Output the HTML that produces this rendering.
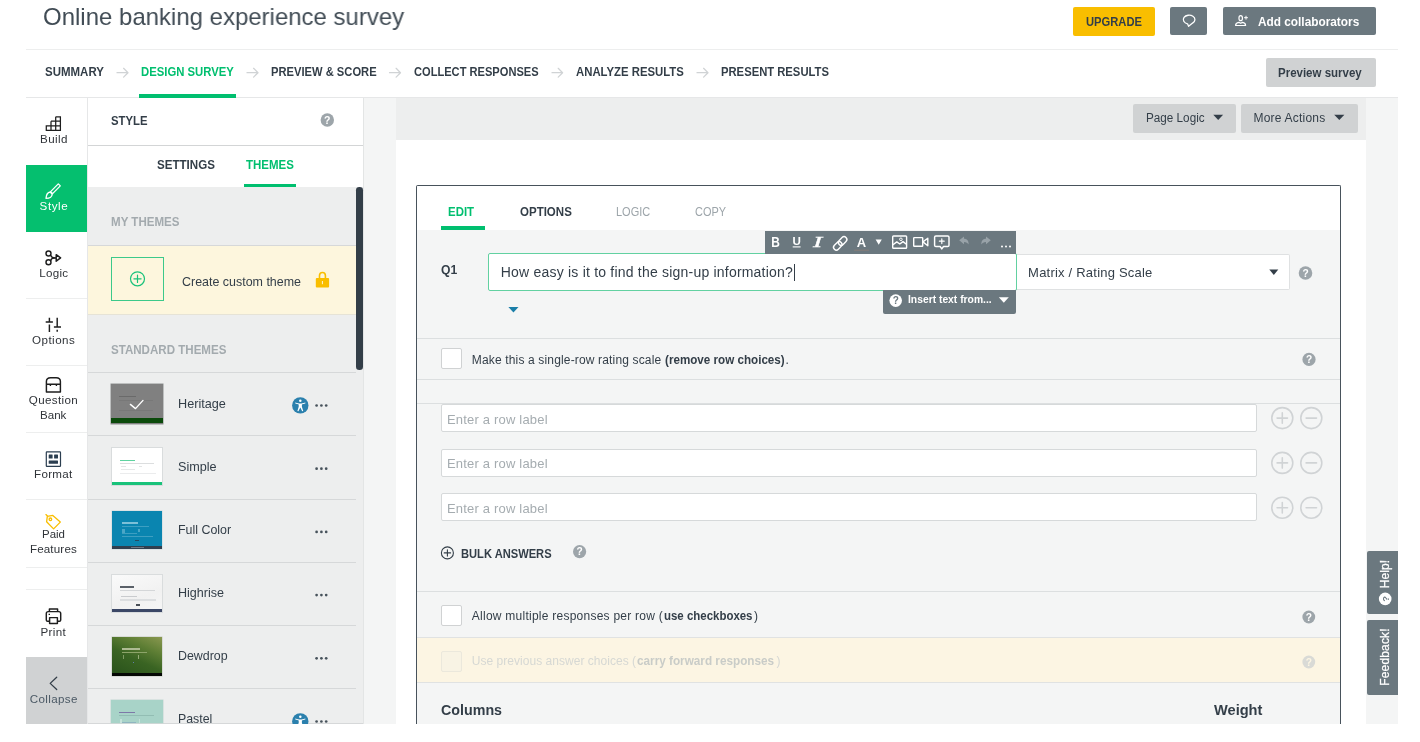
<!DOCTYPE html>
<html lang="en">
<head>
<meta charset="utf-8">
<title>Online banking experience survey</title>
<style>
*{box-sizing:border-box;margin:0;padding:0}
html,body{width:1420px;height:742px;overflow:hidden;background:#fff}
body{font-family:"Liberation Sans",sans-serif;color:#333e48;position:relative}
.a{position:absolute}
.t{position:absolute;white-space:nowrap;line-height:1;color:#333e48;transform-origin:0 50%}
.sep{position:absolute;left:417px;width:923px;height:1px;background:#dcdfe0}
.inp{position:absolute;left:440.5px;width:816px;height:28px;background:#fff;border:1px solid #d6d9da;border-radius:2px}
.cb{position:absolute;left:440.5px;width:21px;height:21px;background:#fff;border:1px solid #d0d2d3;border-radius:2px}
.rsep{position:absolute;left:88px;width:268px;height:1px;background:#d6d8d9}
.sbl{position:absolute;left:26px;width:61px;height:1px;background:#edeeee}
</style>
</head>
<body>
<div id="root" style="position:absolute;left:0;top:0;width:1420px;height:742px;will-change:transform">
<!-- HEADER -->
<div class="a" style="left:1073px;top:7px;width:82px;height:29px;background:#f9be00;border-radius:2px"></div>
<div class="a" style="left:1170px;top:7px;width:37px;height:28px;background:#6b787f;border-radius:2px"></div>
<div class="a" style="left:1223px;top:7px;width:152.5px;height:28px;background:#6b787f;border-radius:2px"></div>
<div class="a" style="left:26px;top:49px;width:1372px;height:1px;background:#edeeee"></div>
<!-- NAV -->
<div class="a" style="left:139px;top:94px;width:97px;height:4px;background:#00bf6f"></div>
<div class="a" style="left:1265.5px;top:58px;width:110px;height:29px;background:#d0d2d3;border-radius:2px"></div>
<div class="a" style="left:26px;top:97px;width:1372px;height:1px;background:#e6e7e8"></div>
<div class="a" style="left:139px;top:94px;width:97px;height:4px;background:#00bf6f"></div>

<!-- MAIN BG -->
<div class="a" style="left:363px;top:98px;width:1035px;height:626px;background:#f4f5f5"></div>
<div class="a" style="left:396px;top:98px;width:970px;height:626px;background:#fff"></div>
<div class="a" style="left:396px;top:98px;width:970px;height:42px;background:#edeeee"></div>
<div class="a" style="left:1133px;top:103.5px;width:103px;height:29px;background:#d0d2d3;border-radius:2px"></div>
<div class="a" style="left:1241px;top:103.5px;width:116.5px;height:29px;background:#d0d2d3;border-radius:2px"></div>

<!-- SIDEBAR -->
<div class="a" style="left:26px;top:98px;width:61px;height:626px;background:#fff"></div>
<div class="a" style="left:87px;top:98px;width:1px;height:626px;background:#e6e7e8"></div>
<div class="a" style="left:26px;top:165px;width:61px;height:66.5px;background:#05bf6f"></div>
<div class="sbl" style="top:298px"></div>
<div class="sbl" style="top:365px"></div>
<div class="sbl" style="top:432px"></div>
<div class="sbl" style="top:499px"></div>
<div class="sbl" style="top:567px"></div>
<div class="sbl" style="top:589px"></div>
<div class="a" style="left:26px;top:657px;width:61px;height:67px;background:#d0d2d3"></div>

<!-- STYLE PANEL -->
<div class="a" style="left:88px;top:98px;width:275px;height:626px;background:#edeeee"></div>
<div class="a" style="left:363px;top:98px;width:1px;height:626px;background:#e3e5e5"></div>
<div class="a" style="left:88px;top:98px;width:275px;height:88.5px;background:#fff"></div>
<div class="a" style="left:88px;top:145px;width:275px;height:1px;background:#d3d5d6"></div>
<div class="a" style="left:243.5px;top:184px;width:52px;height:3px;background:#00bf6f"></div>
<div class="a" style="left:88px;top:244.5px;width:268px;height:70.5px;background:#fdf6dd;border-top:1px solid #d6d8d9;border-bottom:1px solid #e6e3d6"></div>
<div class="a" style="left:110.5px;top:257px;width:53.5px;height:43.5px;border:1px solid #3cc98a"></div>
<div class="a" style="left:356px;top:187px;width:6.6px;height:183.4px;background:#333e48;border-radius:3.3px"></div>
<div class="rsep" style="top:372px"></div>
<div class="rsep" style="top:435.2px"></div>
<div class="rsep" style="top:498.5px"></div>
<div class="rsep" style="top:561.7px"></div>
<div class="rsep" style="top:625px"></div>
<div class="rsep" style="top:688.2px"></div>
<div class="rsep" style="top:723px;width:275px"></div>

<!-- thumbnails -->
<div class="a" style="left:111px;top:384px;width:51.5px;height:40px;background:#808080;box-shadow:0 0 0 .5px #8d8f8f"><div class="a" style="left:0;right:0;top:34px;height:5px;background:#0b4a0b"></div><div class="a" style="left:8px;top:11.5px;width:17px;height:1.5px;background:#6a6a6a"></div><div class="a" style="left:8px;top:15.5px;width:34px;height:1px;background:#787878"></div><div class="a" style="left:8px;top:25.5px;width:34px;height:1px;background:#787878"></div></div>
<div class="a" style="left:111.3px;top:447.2px;width:51.4px;height:39.2px;background:#fff;border:.6px solid #d9dcdd"><div class="a" style="left:0;right:0;bottom:0;height:3.6px;background:#19c27a"></div><div class="a" style="left:7.5px;top:11.5px;width:15.5px;height:1.6px;background:#5fd3a0"></div><div class="a" style="left:7.5px;top:15px;width:34px;height:.8px;background:#dcdedf"></div><div class="a" style="left:8.5px;top:18px;width:5px;height:.8px;background:#e3e5e5"></div><div class="a" style="left:27px;top:18px;width:3px;height:.8px;background:#e3e5e5"></div><div class="a" style="left:8.5px;top:21px;width:14px;height:.8px;background:#e6e8e8"></div><div class="a" style="left:7.5px;top:25px;width:36px;height:.8px;background:#ebeced"></div></div>
<div class="a" style="left:111.6px;top:510.8px;width:50.6px;height:38.5px;background:#0a85b0;box-shadow:0 0 0 .5px #c9d5da"><div class="a" style="left:0;right:0;bottom:0;height:3.3px;background:#2f3f4f"></div><div class="a" style="left:10px;top:11px;width:16px;height:1.8px;background:#7cc0d8"></div><div class="a" style="left:10px;top:15px;width:27px;height:.9px;background:#3d9fc2"></div><div class="a" style="left:10px;top:18.5px;width:3px;height:3.5px;background:#4aa6c6"></div><div class="a" style="left:26px;top:18.5px;width:2px;height:3px;background:#4aa6c6"></div><div class="a" style="left:10px;top:22px;width:15px;height:.9px;background:#3d9fc2"></div><div class="a" style="left:10px;top:25.5px;width:31px;height:1.2px;background:#3f9fc1"></div><div class="a" style="left:23.5px;top:28.8px;width:4px;height:1.6px;background:#234a63"></div><div class="a" style="left:19px;top:36px;width:13px;height:1px;background:#6c7884"></div></div>
<div class="a" style="left:111.3px;top:573.8px;width:51.4px;height:39px;background:linear-gradient(160deg,#fafafa 0%,#f1f1f1 60%,#f6f6f6 100%);border:.6px solid #d9dcdd"><div class="a" style="left:0;right:0;bottom:0;height:2.9px;background:#3b4766"></div><div class="a" style="left:7.5px;top:11.3px;width:14px;height:1.8px;background:#5a6068"></div><div class="a" style="left:7.5px;top:15px;width:35px;height:.8px;background:#d4d6d8"></div><div class="a" style="left:8.5px;top:21.5px;width:16px;height:.9px;background:#c9cbce"></div><div class="a" style="left:7.5px;top:24.5px;width:36px;height:2px;background:#dcdee0"></div><div class="a" style="left:23.5px;top:29.3px;width:4px;height:1.6px;background:#4a4f58"></div></div>
<div class="a" style="left:111.6px;top:637.3px;width:50.6px;height:38.4px;background:linear-gradient(205deg,#8a9850 0%,#5f7f35 28%,#3a6423 55%,#27501a 100%);box-shadow:0 0 0 .5px #c3c9c0"><div class="a" style="left:0;right:0;bottom:0;height:3.2px;background:#050805"></div><div class="a" style="left:10.5px;top:10.8px;width:18px;height:1.6px;background:#aebb93"></div><div class="a" style="left:10.5px;top:14.5px;width:25px;height:.8px;background:#8da46a"></div><div class="a" style="left:11px;top:18px;width:1.5px;height:4px;background:#7f9b63"></div><div class="a" style="left:26px;top:18px;width:1.5px;height:3.5px;background:#94ab76"></div><div class="a" style="left:21px;top:24.5px;width:1.5px;height:1.5px;background:#5f7fae"></div></div>
<div class="a" style="left:111px;top:700.3px;width:51.7px;height:23px;background:#a8d3c8;box-shadow:0 0 0 .5px #c3d6d1"><div class="a" style="left:8px;top:11.5px;width:15.5px;height:1.7px;background:#7d78a8"></div><div class="a" style="left:8px;top:14.8px;width:35px;height:.9px;background:#92bdb3"></div><div class="a" style="left:9px;top:18.5px;width:1.5px;height:4.5px;background:#c5e2da"></div><div class="a" style="left:27.5px;top:18.5px;width:1.5px;height:4.5px;background:#c5e2da"></div><div class="a" style="left:10.5px;top:21.5px;width:14px;height:.9px;background:#8fb5c0"></div></div>

<!-- QUESTION CARD -->
<div class="a" style="left:416px;top:185px;width:925px;height:540px;border:1px solid #47525b;border-bottom:0;border-radius:2px 2px 0 0;background:#f4f5f5"></div>
<div class="a" style="left:417px;top:186px;width:923px;height:44px;background:#fff;border-radius:1px 1px 0 0"></div>
<div class="a" style="left:440.7px;top:226.3px;width:44.6px;height:3.7px;background:#00bf6f"></div>

<div class="a" style="left:488px;top:253px;width:529px;height:38px;background:#fff;border:1px solid #62d1a1;border-radius:2px"></div>
<div class="a" style="left:1017px;top:254px;width:273px;height:36px;background:#fff;border:1px solid #dfe1e2;border-left:0;border-radius:0 2px 2px 0"></div>
<div class="a" style="left:765px;top:231px;width:251px;height:22.8px;background:#6b787f"></div>
<div class="a" style="left:883px;top:289.5px;width:133px;height:24px;background:#6b787f;border-radius:0 0 2px 2px"></div>
<div class="a" style="left:793.6px;top:264px;width:1.3px;height:16.5px;background:#333e48"></div>

<div class="sep" style="top:338px"></div>
<div class="cb" style="top:348.3px"></div>
<div class="sep" style="top:379px"></div>
<div class="sep" style="top:403px"></div>
<div class="inp" style="top:404.3px"></div>
<div class="inp" style="top:448.8px"></div>
<div class="inp" style="top:493.3px"></div>
<div class="sep" style="top:591px"></div>
<div class="cb" style="top:605px"></div>
<div class="a" style="left:417px;top:636.5px;width:923px;height:46.5px;background:#fcf5e3;border-top:1px solid #e0e2e2;border-bottom:1px solid #e0e2e2"></div>
<div class="cb" style="top:650.5px;background:#f8f3e4;border-color:#ebe8dc"></div>

<!-- side tabs -->
<div class="a" style="left:1366.5px;top:551px;width:31.5px;height:63px;background:#6b787f;border-radius:2px 0 0 2px"></div>
<div class="a" style="left:1366.5px;top:620.2px;width:31.5px;height:75.2px;background:#6b787f;border-radius:2px 0 0 2px"></div>
<div class="t" style="left:1385.3px;top:574.4px;font-size:12px;color:#fff;-webkit-text-stroke:.25px #fff;transform-origin:50% 50%;transform:translate(-50%,-50%) rotate(-90deg);letter-spacing:.1px">Help!</div>
<div class="t" style="left:1385.3px;top:657.3px;font-size:12px;color:#fff;-webkit-text-stroke:.25px #fff;transform-origin:50% 50%;transform:translate(-50%,-50%) rotate(-90deg);letter-spacing:.15px">Feedback!</div>

<div class="t" style="left:42.50px;top:4.88px;font-size:24px;transform:scaleX(0.9988);color:#414c55;">Online banking experience survey</div>
<div class="t" style="left:1085.90px;top:15.74px;font-size:12px;transform:scaleX(0.9333);font-weight:700;">UPGRADE</div>
<div class="t" style="left:1258.30px;top:14.90px;font-size:13px;transform:scaleX(0.9099);font-weight:700;color:#fff;">Add collaborators</div>
<div class="t" style="left:1278.40px;top:67.44px;font-size:12px;transform:scaleX(0.9576);font-weight:700;">Preview survey</div>
<div class="t" style="left:44.80px;top:65.84px;font-size:12px;transform:scaleX(0.9570);font-weight:700;">SUMMARY</div>
<div class="t" style="left:141.20px;top:65.84px;font-size:12px;transform:scaleX(0.9424);font-weight:700;color:#00bf6f;">DESIGN SURVEY</div>
<div class="t" style="left:271.00px;top:65.84px;font-size:12px;transform:scaleX(0.9317);font-weight:700;">PREVIEW &amp; SCORE</div>
<div class="t" style="left:413.90px;top:65.84px;font-size:12px;transform:scaleX(0.9252);font-weight:700;">COLLECT RESPONSES</div>
<div class="t" style="left:575.70px;top:65.84px;font-size:12px;transform:scaleX(0.9455);font-weight:700;">ANALYZE RESULTS</div>
<div class="t" style="left:720.70px;top:65.84px;font-size:12px;transform:scaleX(0.9373);font-weight:700;">PRESENT RESULTS</div>
<div class="t" style="left:1146.20px;top:111.84px;font-size:12px;transform:scaleX(0.9759);">Page Logic</div>
<div class="t" style="left:1253.50px;top:111.84px;font-size:12px;letter-spacing:0.216px;">More Actions</div>
<div class="t" style="left:40.00px;top:133.28px;font-size:11.6px;color:#2f3338;letter-spacing:0.417px;">Build</div>
<div class="t" style="left:39.60px;top:200.48px;font-size:11.6px;color:#fff;letter-spacing:0.593px;">Style</div>
<div class="t" style="left:39.30px;top:267.48px;font-size:11.6px;color:#2f3338;letter-spacing:0.245px;">Logic</div>
<div class="t" style="left:32.00px;top:334.48px;font-size:11.6px;color:#2f3338;letter-spacing:0.474px;">Options</div>
<div class="t" style="left:28.80px;top:394.48px;font-size:11.6px;color:#2f3338;letter-spacing:0.349px;">Question</div>
<div class="t" style="left:40.20px;top:408.98px;font-size:11.6px;transform:scaleX(0.9989);color:#2f3338;">Bank</div>
<div class="t" style="left:34.00px;top:468.48px;font-size:11.6px;color:#2f3338;letter-spacing:0.301px;">Format</div>
<div class="t" style="left:42.00px;top:528.48px;font-size:11.6px;transform:scaleX(0.9887);color:#2f3338;">Paid</div>
<div class="t" style="left:29.90px;top:543.18px;font-size:11.6px;color:#2f3338;letter-spacing:0.164px;">Features</div>
<div class="t" style="left:40.50px;top:625.98px;font-size:11.6px;color:#2f3338;letter-spacing:0.371px;">Print</div>
<div class="t" style="left:29.70px;top:693.48px;font-size:11.6px;color:#4b5965;letter-spacing:0.376px;">Collapse</div>
<div class="t" style="left:110.90px;top:115.24px;font-size:12px;transform:scaleX(0.9439);font-weight:700;">STYLE</div>
<div class="t" style="left:156.70px;top:159.24px;font-size:12px;transform:scaleX(0.9650);font-weight:700;">SETTINGS</div>
<div class="t" style="left:245.70px;top:159.24px;font-size:12px;transform:scaleX(0.9560);font-weight:700;color:#00bf6f;">THEMES</div>
<div class="t" style="left:110.90px;top:215.84px;font-size:12px;transform:scaleX(0.9631);font-weight:700;color:#a3aaae;">MY THEMES</div>
<div class="t" style="left:181.90px;top:275.20px;font-size:13px;transform:scaleX(0.9577);">Create custom theme</div>
<div class="t" style="left:110.90px;top:344.34px;font-size:12px;transform:scaleX(0.9635);font-weight:700;color:#a3aaae;">STANDARD THEMES</div>
<div class="t" style="left:177.53px;top:396.80px;font-size:13px;transform:scaleX(0.9748);">Heritage</div>
<div class="t" style="left:177.80px;top:460.00px;font-size:13px;transform:scaleX(0.9720);">Simple</div>
<div class="t" style="left:177.55px;top:523.20px;font-size:13px;transform:scaleX(0.9549);">Full Color</div>
<div class="t" style="left:177.54px;top:586.40px;font-size:13px;transform:scaleX(0.9644);">Highrise</div>
<div class="t" style="left:177.55px;top:649.00px;font-size:13px;transform:scaleX(0.9548);">Dewdrop</div>
<div class="t" style="left:177.55px;top:712.20px;font-size:13px;transform:scaleX(0.9506);">Pastel</div>
<div class="t" style="left:448.00px;top:206.14px;font-size:12px;transform:scaleX(0.9534);font-weight:700;color:#00bf6f;">EDIT</div>
<div class="t" style="left:519.50px;top:206.14px;font-size:12px;transform:scaleX(0.9592);font-weight:700;">OPTIONS</div>
<div class="t" style="left:615.90px;top:206.14px;font-size:12px;transform:scaleX(0.9157);color:#9da5aa;">LOGIC</div>
<div class="t" style="left:695.20px;top:206.14px;font-size:12px;transform:scaleX(0.9117);color:#9da5aa;">COPY</div>
<div class="t" style="left:441.00px;top:262.60px;font-size:13px;transform:scaleX(0.9350);font-weight:700;">Q1</div>
<div class="t" style="left:500.80px;top:265.05px;font-size:14px;letter-spacing:0.207px;">How easy is it to find the sign-up information?</div>
<div class="t" style="left:1028.10px;top:266.20px;font-size:13px;letter-spacing:0.215px;">Matrix / Rating Scale</div>
<div class="t" style="left:908.40px;top:294.19px;font-size:11px;transform:scaleX(0.9374);font-weight:700;color:#fff;">Insert text from...</div>
<div class="t" style="left:471.80px;top:354.14px;font-size:12px;letter-spacing:0.156px;">Make this a single-row rating scale</div>
<div class="t" style="left:665.30px;top:354.14px;font-size:12px;transform:scaleX(0.9702);font-weight:700;">(remove row choices)</div>
<div class="t" style="left:785.50px;top:354.14px;font-size:12px;">.</div>
<div class="t" style="left:447.00px;top:412.50px;font-size:13px;color:#a5acb0;letter-spacing:0.190px;">Enter a row label</div>
<div class="t" style="left:447.00px;top:457.00px;font-size:13px;color:#a5acb0;letter-spacing:0.190px;">Enter a row label</div>
<div class="t" style="left:447.00px;top:501.50px;font-size:13px;color:#a5acb0;letter-spacing:0.190px;">Enter a row label</div>
<div class="t" style="left:461.40px;top:547.54px;font-size:12px;transform:scaleX(0.9286);font-weight:700;">BULK ANSWERS</div>
<div class="t" style="left:471.80px;top:610.44px;font-size:12px;letter-spacing:0.250px;">Allow multiple responses per row (</div>
<div class="t" style="left:664.00px;top:610.44px;font-size:12px;transform:scaleX(0.9544);font-weight:700;">use checkboxes</div>
<div class="t" style="left:754.00px;top:610.44px;font-size:12px;">)</div>
<div class="t" style="left:471.80px;top:655.44px;font-size:12px;color:#d6d8d4;letter-spacing:0.032px;">Use previous answer choices (</div>
<div class="t" style="left:637.40px;top:655.44px;font-size:12px;transform:scaleX(0.9787);font-weight:700;color:#c9ccc8;">carry forward responses</div>
<div class="t" style="left:776.40px;top:655.44px;font-size:12px;color:#d6d8d4;">)</div>
<div class="t" style="left:440.80px;top:702.30px;font-size:15px;transform:scaleX(0.9510);font-weight:700;">Columns</div>
<div class="t" style="left:1213.60px;top:702.30px;font-size:15px;transform:scaleX(0.9734);font-weight:700;">Weight</div>

<svg class="a" style="left:0;top:0" width="1420" height="742" viewBox="0 0 1420 742" fill="none" font-family="Liberation Sans, sans-serif">
<!-- header: comment bubble -->
<g stroke="#fff" stroke-width="1.3" stroke-linejoin="round" stroke-linecap="round">
<path d="M1187.5 23.8 A5.8 4.4 0 1 1 1192.6 23.1 L1188.6 26.3 Z"/>
</g>
<!-- header: add collaborator -->
<g stroke="#fff" stroke-width="1.2" stroke-linecap="round" stroke-linejoin="round">
<ellipse cx="1240.7" cy="18.2" rx="1.75" ry="2.5"/>
<path d="M1235.6 25.5 H1245.6 C1245.6 23.6 1244.4 22.7 1242.5 22.4 L1240.7 23.3 L1238.9 22.4 C1236.9 22.7 1235.6 23.6 1235.6 25.5 Z"/>
<path d="M1244.5 17.7 H1247.5 M1246 16.2 V19.2" stroke-width="1"/>
</g>
<!-- nav arrows -->
<g stroke="#d0d3d5" stroke-width="1.25" stroke-linecap="round" stroke-linejoin="round">
<path d="M117 72.7 H128 M123.6 68.3 L128 72.7 L123.6 77.1"/>
<path d="M247 72.7 H258 M253.6 68.3 L258 72.7 L253.6 77.1"/>
<path d="M389.5 72.7 H400.5 M396.1 68.3 L400.5 72.7 L396.1 77.1"/>
<path d="M552 72.7 H562.6 M558.2 68.3 L562.6 72.7 L558.2 77.1"/>
<path d="M697 72.7 H708 M703.6 68.3 L708 72.7 L703.6 77.1"/>
</g>
<!-- button carets -->
<path d="M1213.3 114.8 H1223.1 L1218.2 120.1 Z" fill="#333e48"/>
<path d="M1334.2 114.8 H1344.4 L1339.3 120.1 Z" fill="#333e48"/>
<!-- sidebar: build -->
<g stroke="#1e1e1e" stroke-width="1.25">
<path d="M46.3 125.8 H60.4 V130.4 H46.3 Z M51 121.2 H60.4 M55.7 116.8 H60.4 V125.8 M51 121.2 V130.4 M55.7 116.8 V130.4"/>
</g>
<!-- sidebar: style brush -->
<g stroke="#fff" stroke-width="1.3" stroke-linejoin="round" stroke-linecap="round">
<path d="M58.3 183.9 L60.3 185.9 L52.6 193.6 L50.6 191.6 Z"/>
<path d="M50.2 192 C48 192.3 46.3 194 46 198.3 C49.8 198.3 52 196.8 52.2 194.2 Z"/>
</g>
<!-- sidebar: logic -->
<g stroke="#1e1e1e" stroke-width="1.45" stroke-linejoin="round">
<circle cx="48.5" cy="253.4" r="2.5"/><circle cx="48.5" cy="262.3" r="2.5"/>
<path d="M50.6 255 C51.5 257.5 52.5 257.9 56 257.9 M50.6 260.8 C51.5 258.3 52.5 257.9 56 257.9"/>
<path d="M56.2 254.6 L60.6 257.9 L56.2 261.2 Z"/>
</g>
<!-- sidebar: options -->
<g stroke="#1e1e1e" stroke-width="1.45">
<path d="M49.4 317.8 V321.6 M45.7 321.9 H52.9 M49.4 324.4 V332 M57.2 317.8 V326.6 M53.9 327 H61 M57.2 329.8 V331.8"/>
</g>
<!-- sidebar: question bank -->
<g stroke="#1e1e1e" stroke-width="1.45" stroke-linejoin="round">
<path d="M46.4 391.9 V381.6 C46.4 379 48.4 377.7 50.6 377.7 H56.2 C58.4 377.7 60.4 379 60.4 381.6 V391.9 Z M46.4 384.3 H60.4"/>
<path d="M50.4 384.6 V386 M56.4 384.6 V386" stroke-width="1.4"/>
</g>
<!-- sidebar: format -->
<rect x="46.3" y="451.9" width="14.2" height="14.5" rx="0.6" stroke="#2b3e50" stroke-width="1.2"/>
<rect x="48.7" y="454.5" width="3.9" height="3.9" rx=".5" fill="#2b3e50"/><rect x="54.1" y="454.5" width="3.9" height="3.9" rx=".5" fill="#2b3e50"/><rect x="48.7" y="460.5" width="9.3" height="3.3" rx=".5" fill="#2b3e50"/>
<!-- sidebar: paid features tag -->
<g stroke="#f9be00" stroke-width="1.3" stroke-linejoin="round" stroke-linecap="round">
<path d="M47.3 516.3 L52.8 515.4 L60.3 522.1 L53.6 528.9 L46.6 521.8 Z M45.9 514.6 L48 516.5"/>
<circle cx="50.4" cy="519.3" r="1.3"/>
</g>
<!-- sidebar: print -->
<g stroke="#1e1e1e" stroke-width="1.45" stroke-linejoin="round">
<path d="M49.4 611.6 V609 H57.6 V611.6"/>
<path d="M49.6 621.2 H47.6 C46.7 621.2 46.3 620.7 46.3 619.9 V613.4 C46.3 612.2 47.1 611.6 48.2 611.6 H58.8 C59.9 611.6 60.7 612.2 60.7 613.4 V619.9 C60.7 620.7 60.3 621.2 59.4 621.2 H57.4"/>
<path d="M49.6 617.6 H57.4 V623.4 H49.6 Z"/>
<path d="M48.6 614.3 H50" stroke-width="1.2"/>
</g>
<!-- sidebar: collapse chevron -->
<path d="M56.7 677.3 L50.2 683.4 L56.7 689.5" stroke="#333e48" stroke-width="1.3" stroke-linejoin="round" stroke-linecap="round"/>
<!-- panel help -->
<circle cx="327.3" cy="120" r="6.7" fill="#9da5aa"/>
<text x="327.3" y="123.8" font-size="10.5" font-weight="700" fill="#fff" text-anchor="middle">?</text>
<!-- create plus -->
<g stroke="#19c27a" stroke-width="1.2" stroke-linecap="round"><circle cx="137.5" cy="278.8" r="7"/><path d="M133.9 278.8 H141.1 M137.5 275.2 V282.4"/></g>
<!-- lock -->
<rect x="315.8" y="278" width="13.3" height="9.6" rx="1" fill="#f9be00"/>
<path d="M319.5 278.5 V275.6 C319.5 273.6 320.8 272.5 322.45 272.5 C324.1 272.5 325.4 273.6 325.4 275.6 V278.5" stroke="#f9be00" stroke-width="1.6"/>
<rect x="321.9" y="281" width="1.1" height="3.2" fill="#fdf1c4"/>
<!-- accessibility -->
<g>
<circle cx="300.3" cy="405.4" r="8.2" fill="#2b80ad"/>
<circle cx="300.3" cy="400.8" r="1.25" fill="#fff"/>
<path d="M295.4 402.4 C297.5 403.3 298.8 403.4 300.3 403.4 C301.8 403.4 303.1 403.3 305.2 402.4 L305.5 403.3 C304 404 302.6 404.3 301.9 404.4 L301.9 406.8 L303.2 410.9 L302.2 411.2 L300.3 407.6 L298.4 411.2 L297.4 410.9 L298.7 406.8 L298.7 404.4 C298 404.3 296.6 404 295.1 403.3 Z" fill="#fff"/>
</g>
<g>
<circle cx="300.3" cy="721.4" r="8.2" fill="#2b80ad"/>
<circle cx="300.3" cy="716.8" r="1.25" fill="#fff"/>
<path d="M295.4 718.4 C297.5 719.3 298.8 719.4 300.3 719.4 C301.8 719.4 303.1 719.3 305.2 718.4 L305.5 719.3 C304 720 302.6 720.3 301.9 720.4 L301.9 722.8 L303.2 726.9 L297.4 726.9 L298.7 722.8 L298.7 720.4 C298 720.3 296.6 720 295.1 719.3 Z" fill="#fff"/>
</g>
<!-- row dots -->
<g fill="#47525b">
<circle cx="316.6" cy="405.5" r="1.35"/><circle cx="321.4" cy="405.5" r="1.35"/><circle cx="326.2" cy="405.5" r="1.35"/>
<circle cx="316.6" cy="468.7" r="1.35"/><circle cx="321.4" cy="468.7" r="1.35"/><circle cx="326.2" cy="468.7" r="1.35"/>
<circle cx="316.6" cy="531.9" r="1.35"/><circle cx="321.4" cy="531.9" r="1.35"/><circle cx="326.2" cy="531.9" r="1.35"/>
<circle cx="316.6" cy="595.1" r="1.35"/><circle cx="321.4" cy="595.1" r="1.35"/><circle cx="326.2" cy="595.1" r="1.35"/>
<circle cx="316.6" cy="658.3" r="1.35"/><circle cx="321.4" cy="658.3" r="1.35"/><circle cx="326.2" cy="658.3" r="1.35"/>
<circle cx="316.6" cy="721.5" r="1.35"/><circle cx="321.4" cy="721.5" r="1.35"/><circle cx="326.2" cy="721.5" r="1.35"/>
</g>
<!-- heritage check -->
<path d="M130.4 404.4 L135.5 408.6 L143 400.4" stroke="#fff" stroke-width="1.4" stroke-linecap="round" stroke-linejoin="round"/>

<!-- toolbar icons -->
<text x="771.2" y="247.2" font-size="14.5" font-weight="700" fill="#fff" textLength="8.6" lengthAdjust="spacingAndGlyphs">B</text>
<text x="792.4" y="245.3" font-size="11.8" font-weight="700" fill="#fff" textLength="8.4" lengthAdjust="spacingAndGlyphs">U</text>
<path d="M792.7 246.9 H800.6" stroke="#fff" stroke-width="1.1"/>
<text x="813" y="247.2" font-size="15.5" font-style="italic" font-family="Liberation Serif, serif" fill="#fff" stroke="#fff" stroke-width=".35" textLength="9.2" lengthAdjust="spacingAndGlyphs">I</text>
<g stroke="#fff" stroke-width="1.4" stroke-linecap="round" transform="rotate(-45 840.2 243.4)">
<rect x="832" y="240.6" width="9.6" height="5.6" rx="2.8"/>
<rect x="838.8" y="240.6" width="9.6" height="5.6" rx="2.8"/>
</g>
<text x="856.8" y="247.2" font-size="13.5" font-weight="700" fill="#fff" textLength="9.4" lengthAdjust="spacingAndGlyphs">A</text>
<path d="M854.2 250.2 H869" stroke="#8b7f78" stroke-width="0.9"/>
<path d="M875.6 239.4 H881.8 L878.7 244.7 Z" fill="#fff"/>
<!-- image -->
<g stroke="#fff" stroke-width="1.4" stroke-linejoin="round">
<rect x="892.7" y="236" width="13.9" height="12.3" rx=".8"/>
<path d="M893 244.8 L896.8 241.9 L899.8 244 L903 241.6 L906.4 244.3"/>
<circle cx="900.9" cy="239.3" r="1.3" stroke-width="1"/>
</g>
<!-- video -->
<g stroke="#fff" stroke-width="1.4" stroke-linejoin="round">
<rect x="913.7" y="237.6" width="9" height="8.7" rx=".6"/>
<path d="M922.9 241.9 L927.8 238.2 V245.7 Z"/>
</g>
<!-- comment plus -->
<g stroke="#fff" stroke-width="1.45" stroke-linejoin="round" stroke-linecap="round">
<path d="M935.9 236 H947.7 C948.6 236 949 236.5 949 237.3 V245.2 C949 246 948.6 246.5 947.7 246.5 H943.5 L941.8 248.9 L940.1 246.5 H935.9 C935 246.5 934.6 246 934.6 245.2 V237.3 C934.6 236.5 935 236 935.9 236 Z"/>
<path d="M939.4 241.2 H944.2 M941.8 238.8 V243.6" stroke-width="1.2"/>
</g>
<!-- undo / redo -->
<path d="M959.2 240.2 L964 236.4 V238.8 C967 238.9 968.8 240.6 968.6 244.6 C967.7 242.7 966.3 241.9 964 241.9 V244.2 Z" fill="#98a2a8"/>
<path d="M990.8 240.2 L986 236.4 V238.8 C983 238.9 981.2 240.6 981.4 244.6 C982.3 242.7 983.7 241.9 986 241.9 V244.2 Z" fill="#98a2a8"/>
<g fill="#fff"><circle cx="1002" cy="246.5" r="1"/><circle cx="1006" cy="246.5" r="1"/><circle cx="1010" cy="246.5" r="1"/></g>
<!-- insert text help + caret -->
<circle cx="895.7" cy="300.6" r="6.3" fill="#fff"/>
<text x="895.7" y="304.2" font-size="10" font-weight="700" fill="#6b787f" text-anchor="middle">?</text>
<path d="M998.8 297.3 H1008.8 L1003.8 302.8 Z" fill="#fff"/>
<!-- dropdown caret -->
<path d="M1269.3 269.5 H1278.3 L1273.8 274.9 Z" fill="#333e48"/>
<!-- blue triangle -->
<path d="M508.4 307 H518.5 L513.45 312.6 Z" fill="#1a7ea8"/>
<!-- help icons -->
<g fill="#9da5aa"><circle cx="1305.5" cy="273" r="6.8"/><circle cx="1309" cy="359.4" r="6.6"/><circle cx="579.6" cy="551.7" r="6.6"/><circle cx="1308.8" cy="617" r="6.4"/></g>
<circle cx="1308.8" cy="662" r="6.4" fill="#d9dad6"/>
<g font-size="10.2" font-weight="700" fill="#fff" text-anchor="middle"><text x="1305.5" y="276.7">?</text><text x="1309" y="363.1">?</text><text x="579.6" y="555.4">?</text><text x="1308.8" y="620.7">?</text><text x="1308.8" y="665.7" fill="#fcf5e3">?</text></g>
<!-- plus/minus circles -->
<g stroke="#d0d3d5" stroke-width="1.6" stroke-linecap="round">
<circle cx="1282.3" cy="418.1" r="10.5"/><path d="M1277.1 418.1 H1287.5 M1282.3 412.9 V423.3"/>
<circle cx="1311.3" cy="418.1" r="10.5"/><path d="M1306.1 418.1 H1316.5"/>
<circle cx="1282.3" cy="462.9" r="10.5"/><path d="M1277.1 462.9 H1287.5 M1282.3 457.7 V468.1"/>
<circle cx="1311.3" cy="462.9" r="10.5"/><path d="M1306.1 462.9 H1316.5"/>
<circle cx="1282.3" cy="507.7" r="10.5"/><path d="M1277.1 507.7 H1287.5 M1282.3 502.5 V512.9"/>
<circle cx="1311.3" cy="507.7" r="10.5"/><path d="M1306.1 507.7 H1316.5"/>
</g>
<!-- bulk answers plus -->
<g stroke="#333e48" stroke-width="1.1" stroke-linecap="round"><circle cx="447.4" cy="552.9" r="6"/><path d="M444.2 552.9 H450.6 M447.4 549.7 V556.1"/></g>
<!-- help tab icon -->
<circle cx="1385.2" cy="598.9" r="6.3" fill="#fff"/>
<text x="1385.2" y="602.5" font-size="9.5" font-weight="700" fill="#6b787f" text-anchor="middle" transform="rotate(-90 1385.2 598.9)">?</text>
</svg>


<!-- white margins -->
<div class="a" style="left:0;top:724px;width:1420px;height:18px;background:#fff"></div>
<div class="a" style="left:1398px;top:0;width:22px;height:742px;background:#fff"></div>
<div class="a" style="left:0;top:0;width:26px;height:742px;background:#fff"></div>
</div>
</body>
</html>
